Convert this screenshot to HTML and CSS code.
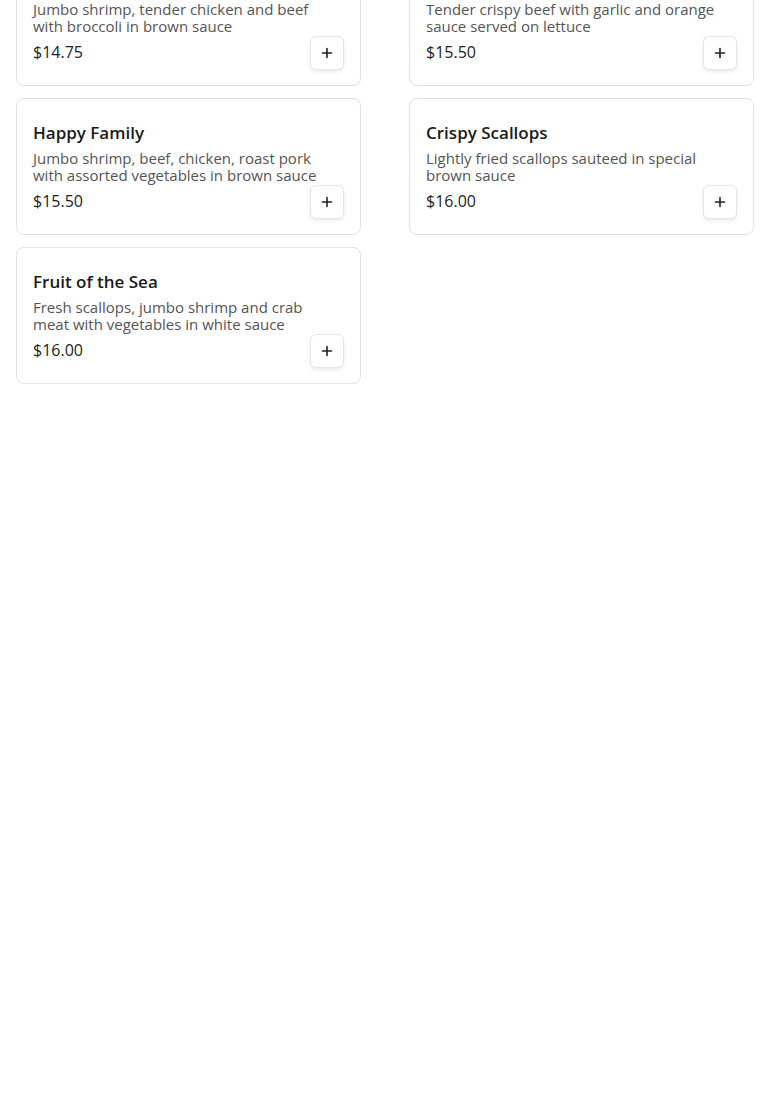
FILE: index.html
```html
<!DOCTYPE html>
<html lang="en">
<head>
    <meta charset="UTF-8">
    <meta name="viewport" content="width=device-width, initial-scale=1.0">
    <title>Menu</title>
    <link rel="stylesheet" href="styles.css">
</head>
<body>

    <div class="menu-list">

        <div class="menu-card">
            <h3>Triple Delight</h3>
            <p>Jumbo shrimp, tender chicken and beef with broccoli in brown sauce</p>
            <div class="price-row">
                <span class="price">$14.75</span>
                <button class="add-btn" aria-label="Add">
                    <svg width="12" height="12" viewBox="0 0 12 12"><path d="M6 1.5v9M1.5 6h9" stroke="#222" stroke-width="1.6" stroke-linecap="round"/></svg>
                </button>
            </div>
        </div>

        <div class="menu-card">
            <h3>Orange Beef</h3>
            <p>Tender crispy beef with garlic and orange sauce served on lettuce</p>
            <div class="price-row">
                <span class="price">$15.50</span>
                <button class="add-btn" aria-label="Add">
                    <svg width="12" height="12" viewBox="0 0 12 12"><path d="M6 1.5v9M1.5 6h9" stroke="#222" stroke-width="1.6" stroke-linecap="round"/></svg>
                </button>
            </div>
        </div>

        <div class="menu-card">
            <h3>Happy Family</h3>
            <p>Jumbo shrimp, beef, chicken, roast pork with assorted vegetables in brown sauce</p>
            <div class="price-row">
                <span class="price">$15.50</span>
                <button class="add-btn" aria-label="Add">
                    <svg width="12" height="12" viewBox="0 0 12 12"><path d="M6 1.5v9M1.5 6h9" stroke="#222" stroke-width="1.6" stroke-linecap="round"/></svg>
                </button>
            </div>
        </div>

        <div class="menu-card">
            <h3>Crispy Scallops</h3>
            <p>Lightly fried scallops sauteed in special brown sauce</p>
            <div class="price-row">
                <span class="price">$16.00</span>
                <button class="add-btn" aria-label="Add">
                    <svg width="12" height="12" viewBox="0 0 12 12"><path d="M6 1.5v9M1.5 6h9" stroke="#222" stroke-width="1.6" stroke-linecap="round"/></svg>
                </button>
            </div>
        </div>

        <div class="menu-card">
            <h3>Fruit of the Sea</h3>
            <p>Fresh scallops, jumbo shrimp and crab meat with vegetables in white sauce</p>
            <div class="price-row">
                <span class="price">$16.00</span>
                <button class="add-btn" aria-label="Add">
                    <svg width="12" height="12" viewBox="0 0 12 12"><path d="M6 1.5v9M1.5 6h9" stroke="#222" stroke-width="1.6" stroke-linecap="round"/></svg>
                </button>
            </div>
        </div>

    </div>

</body>
</html>
```

FILE: styles.css
```css
/* lista de pratos, rolada um pouco para baixo */
body {
    font-family: "Open Sans", "Liberation Sans", sans-serif;
    background-color: #ffffff;
    color: #1a1a1a;
    margin: 0;
    padding: 0 16px;
}
.menu-list {
    display: grid;
    grid-template-columns: 1fr 1fr;
    column-gap: 48px;
    row-gap: 12px;
    margin-top: -51px;
}
.menu-card {
    display: flex;
    flex-direction: column;
    border: 1px solid #e3e3e3;
    border-radius: 8px;
    padding: 24px 16px 15px;
}
.menu-card h3 {
    margin: 0;
    font-size: 17px;
    font-weight: 600;
    line-height: 20px;
    color: #1a1a1a;
}
.menu-card p {
    margin: 7px 0 0;
    max-width: 295px;
    font-size: 15px;
    line-height: 17px;
    color: #555;
}
.price-row {
    display: flex;
    align-items: center;
    justify-content: space-between;
    margin-top: 1px;
}
.price {
    font-size: 16px;
    line-height: 20px;
    color: #222;
    margin-top: -2px;
}
.add-btn {
    width: 34px;
    height: 34px;
    display: flex;
    align-items: center;
    justify-content: center;
    background-color: #fff;
    border: 1px solid #e6e6e6;
    border-radius: 6px;
    box-shadow: 0 2px 4px rgba(0,0,0,0.08);
    padding: 0;
    cursor: pointer;
}
```
